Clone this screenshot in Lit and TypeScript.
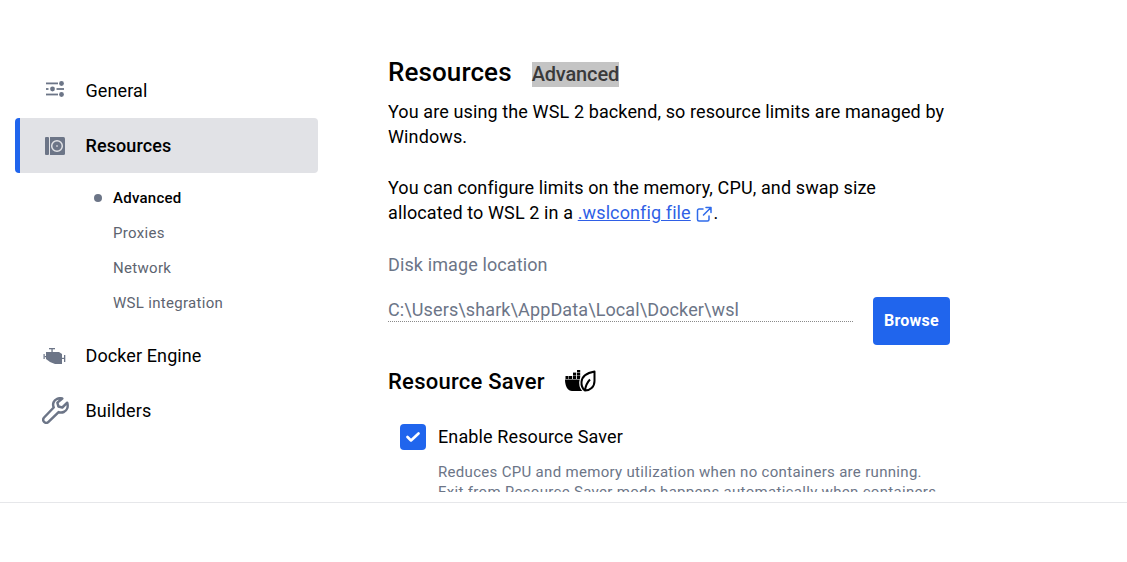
import { LitElement, html, css, svg } from "lit";
import { customElement } from "lit/decorators.js";

const iconGeneral = svg`<svg class="ico gen" width="18" height="16" viewBox="0 0 18 16" fill="#6c7587">
<rect x="0" y="1.500" width="12" height="1.800"/><circle cx="15.500" cy="2.500" r="2.400"/>
<rect x="0" y="7.100" width="2.500" height="1.800"/><circle cx="6.500" cy="8" r="2.400"/><rect x="10.500" y="7.100" width="7.500" height="1.800"/>
<rect x="0" y="12.600" width="12" height="1.800"/><circle cx="15.500" cy="13.500" r="2.400"/></svg>`;
const iconRes = svg`<svg class="ico res" width="20" height="18" viewBox="0 0 20 18"><rect x="0" y="0" width="4" height="18" rx="1" fill="#6c7587"/>
<path fill="#6c7587" d="M5 0H18.500A1.500 1.500 0 0 1 20 1.500V16.500A1.500 1.500 0 0 1 18.500 18H5Z"/>
<circle cx="12" cy="9" r="5.300" fill="none" stroke="#e1e2e6" stroke-width="1.500"/><circle cx="12" cy="9" r="1" fill="#c3c6ce"/></svg>`;
const iconEngine = svg`<svg class="ico" width="23" height="18" viewBox="0 0 23 18" fill="#6c7587">
<rect x="6" y="1" width="6" height="1.300"/><rect x="8.400" y="2" width="1.300" height="3.500"/>
<path d="M3 5H16L19 7V17H12L7 15L3 12Z"/>
<rect x="0.500" y="7" width="1.200" height="5"/><rect x="1.500" y="9" width="2" height="1.200"/>
<rect x="21" y="8" width="1.300" height="7"/><rect x="19" y="10.800" width="2" height="1.200"/></svg>`;
const iconWrench = svg`<svg class="ico wr" width="27" height="27" viewBox="0 0 27 27" fill="none" stroke="#6c7587" stroke-width="2.500" stroke-linejoin="round">
<path d="M25.200 5.700L20.300 10.500L16.400 9.500L15.400 5.600L20.300 1.500C16.800 .6 12.900 2 11.600 5.300C10.800 7.300 11.100 9.100 11.700 10.500L2.100 20.500C.8 21.800.8 23.700 2.100 24.900C3.400 26.200 5.300 26.200 6.500 24.900L16.600 15.100C18.100 15.600 19.900 15.800 21.700 15C25 13.600 26.500 9.900 25.200 5.700Z"/></svg>`;
const iconLink = svg`<svg class="ext" width="16" height="16" viewBox="0 0 16 16" fill="none" stroke="#2f6bea" stroke-width="1.500" stroke-linecap="round" stroke-linejoin="round">
<path d="M7 3H3a1.500 1.500 0 0 0-1.500 1.500v9A1.500 1.500 0 0 0 3 15h8.500a1.500 1.500 0 0 0 1.500-1.500V10"/><path d="M7.500 9L14.500 2M10 1.500h5v5"/></svg>`;
const iconSaver = svg`<svg width="31" height="22" viewBox="0 0 31 22">
<g fill="#000"><rect x="4" y="6" width="3.200" height="3"/><rect x="8" y="6" width="3.200" height="3"/><rect x="8" y="2.600" width="3.200" height="3"/><rect x="12" y="6" width="3.200" height="3"/><rect x="12" y="2.600" width="3.200" height="3"/><rect x="12" y="0" width="3.200" height="2.200"/><rect x="0.500" y="6" width="3" height="3"/>
<path d="M0 9.500H20V21H7C3 21 0 16.500 0 9.500Z"/></g>
<path fill="#fff" stroke="#fff" stroke-width="4.500" d="M29.500 1.500C24 2.500 17 5.500 16.500 12C16.200 16 18 19 20 20.500C25 20.500 29.500 17 29.500 11Z"/>
<path fill="none" stroke="#000" stroke-width="2" stroke-linejoin="round" d="M29.500 1.500C24 2.500 17 5.500 16.500 12C16.200 16 18 19 20 20.500C25 20.500 29.500 17 29.500 11ZM20 20.500C20.500 16.500 22 12.500 25 9.500"/></svg>`;

@customElement("app-root")
export class AppRoot extends LitElement {
  static styles = css`
    :host { display: block; width: 1127px; height: 562px; background: #fff; font-family: Roboto, sans-serif; color: #000; overflow: hidden; }
    .top { height: 502px; display: flex; overflow: hidden; border-bottom: 1px solid #e6e7ea; box-sizing: content-box; }
    nav { width: 303px; margin-left: 15px; padding-top: 63px; flex: none; }
    .item { height: 55px; display: flex; align-items: center; font-size: 18px; letter-spacing: 0.1px; border-radius: 4px; box-sizing: border-box; }
    .slot { width: 70.500px; display: flex; justify-content: center; flex: none; padding-left: 9px; padding-right: 1px; box-sizing: border-box; }
    .gen { margin: -3px 0 0 1px; }
    .res { margin: 0 0 0 1px; }
    .wr { margin-left: 2px; }
    .active { background: #e1e2e6; border-left: 5px solid #2065ed; font-weight: 500; }
    .active .slot { width: 65.500px; padding-left: 4px; padding-right: 1px; }
    .subs { padding: 7px 0 8px 0; }
    .sub { height: 35px; display: flex; align-items: center; padding-left: 98px; font-size: 15px; color: #5d6470; letter-spacing: 0.3px; position: relative; }
    .sub.on { color: #000; font-weight: 500; letter-spacing: 0.25px; }
    .dot { position: absolute; left: 79px; top: 14px; width: 8px; height: 8px; border-radius: 50%; background: #6c7587; }
    main { margin-left: 70px; width: 562px; padding-top: 56px; height: 436px; overflow: hidden; flex: none; letter-spacing: 0.115px; }
    .head { display: flex; align-items: center; height: 32px; gap: 20px; }
    h1 { margin: 0; font-size: 26px; font-weight: 500; letter-spacing: 0.1px; }
    .mark { background: #c4c4c4; color: #3a3a3a; font-size: 20px; font-weight: 500; line-height: 25px; margin-top: 5px; letter-spacing: -0.15px; }
    p { margin: 0; font-size: 18px; line-height: 25px; }
    .intro { margin-top: 11px; }
    .gap { margin-top: 26px; }
    a { color: #2f5fe6; text-decoration: underline; }
    .ext { vertical-align: -3px; margin: 0 1px 0 1px; }
    .label { margin-top: 27px; font-size: 18px; line-height: 25px; color: #6c7587; }
    .row { display: flex; margin-top: 20px; gap: 20px; }
    .path { flex: 1; font-size: 18px; color: #6c7587; line-height: 26px; height: 24px; border-bottom: 1px dotted #8a8a8a; box-sizing: content-box; }
    button { width: 77px; height: 48px; border: 0; border-radius: 4px; background: #2065ed; color: #fff; font: 700 16px Roboto, sans-serif; letter-spacing: 0.25px; padding: 0 0 2px; }
    .saver { display: flex; align-items: center; gap: 20px; margin-top: 20px; height: 32px; }
    h2 { margin: 0; font-size: 22px; font-weight: 500; letter-spacing: 0.25px; }
    .check { display: flex; align-items: center; margin: 27px 0 0 12px; gap: 12px; font-size: 18px; height: 26px; }
    .check-label { padding-bottom: 2px; }
    .box { width: 26px; height: 26px; border-radius: 4px; background: #2065ed; display: flex; align-items: center; justify-content: center; }
    .desc { margin: 12px 0 0 50px; font-size: 15px; line-height: 20px; color: #6c7587; letter-spacing: 0.31px; }
  `;
  render() {
    return html`<div class="top">
      <nav>
        <div class="item"><span class="slot">${iconGeneral}</span>General</div>
        <div class="item active"><span class="slot">${iconRes}</span>Resources</div>
        <div class="subs">
          <div class="sub on"><span class="dot"></span>Advanced</div>
          <div class="sub">Proxies</div>
          <div class="sub">Network</div>
          <div class="sub">WSL integration</div>
        </div>
        <div class="item"><span class="slot">${iconEngine}</span>Docker Engine</div>
        <div class="item"><span class="slot">${iconWrench}</span>Builders</div>
      </nav>
      <main>
        <div class="head"><h1>Resources</h1><span class="mark">Advanced</span></div>
        <p class="intro">You are using the WSL 2 backend, so resource limits are managed by Windows.</p>
        <p class="gap">You can configure limits on the memory, CPU, and swap size<br>allocated to WSL 2 in a <a>.wslconfig file</a> ${iconLink}.</p>
        <div class="label">Disk image location</div>
        <div class="row"><div class="path">C:\\Users\\shark\\AppData\\Local\\Docker\\wsl</div><button>Browse</button></div>
        <div class="saver"><h2>Resource Saver</h2>${iconSaver}</div>
        <div class="check"><span class="box"><svg width="14" height="12" viewBox="0 0 14 12" fill="none" stroke="#fff" stroke-width="2.600" stroke-linecap="round" stroke-linejoin="round"><path d="M1.500 6L5 9.500L12.500 2.500"/></svg></span><span class="check-label">Enable Resource Saver</span></div>
        <div class="desc">Reduces CPU and memory utilization when no containers are running.<br>Exit from Resource Saver mode happens automatically when containers</div>
      </main>
    </div>`;
  }
}
